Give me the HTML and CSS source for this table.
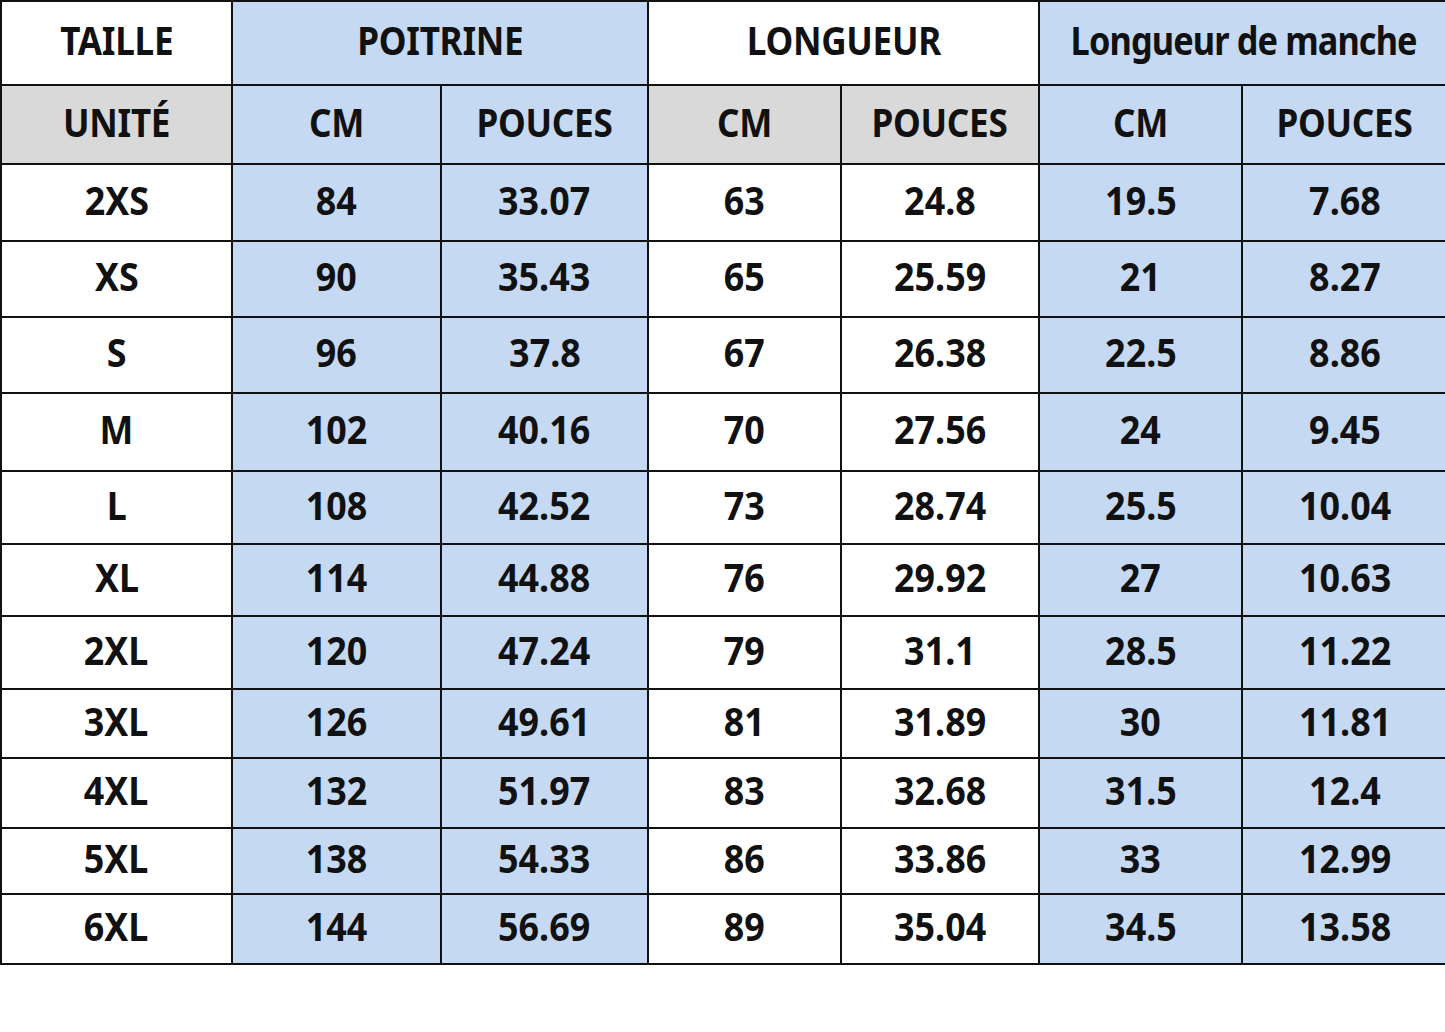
FILE: index.html
```html
<!DOCTYPE html>
<html lang="fr">
<head>
<meta charset="utf-8">
<title>Guide des tailles</title>
<link rel="stylesheet" href="styles.css">
</head>
<body>
<div class="chart">
  <div class="c w"><span class="t h">TAILLE</span></div>
  <div class="c b span2"><span class="t h">POITRINE</span></div>
  <div class="c w span2"><span class="t h">LONGUEUR</span></div>
  <div class="c b span2 last"><span class="t lc">Longueur de manche</span></div>

  <div class="c g"><span class="t h">UNITÉ</span></div>
  <div class="c b"><span class="t h">CM</span></div>
  <div class="c b"><span class="t h">POUCES</span></div>
  <div class="c g"><span class="t h">CM</span></div>
  <div class="c g"><span class="t h">POUCES</span></div>
  <div class="c b"><span class="t h">CM</span></div>
  <div class="c b last"><span class="t h">POUCES</span></div>

  <div class="c w"><span class="t">2XS</span></div><div class="c b"><span class="t">84</span></div><div class="c b"><span class="t">33.07</span></div><div class="c w"><span class="t">63</span></div><div class="c w"><span class="t">24.8</span></div><div class="c b"><span class="t">19.5</span></div><div class="c b last"><span class="t">7.68</span></div>
  <div class="c w"><span class="t">XS</span></div><div class="c b"><span class="t">90</span></div><div class="c b"><span class="t">35.43</span></div><div class="c w"><span class="t">65</span></div><div class="c w"><span class="t">25.59</span></div><div class="c b"><span class="t">21</span></div><div class="c b last"><span class="t">8.27</span></div>
  <div class="c w"><span class="t">S</span></div><div class="c b"><span class="t">96</span></div><div class="c b"><span class="t">37.8</span></div><div class="c w"><span class="t">67</span></div><div class="c w"><span class="t">26.38</span></div><div class="c b"><span class="t">22.5</span></div><div class="c b last"><span class="t">8.86</span></div>
  <div class="c w"><span class="t">M</span></div><div class="c b"><span class="t">102</span></div><div class="c b"><span class="t">40.16</span></div><div class="c w"><span class="t">70</span></div><div class="c w"><span class="t">27.56</span></div><div class="c b"><span class="t">24</span></div><div class="c b last"><span class="t">9.45</span></div>
  <div class="c w"><span class="t">L</span></div><div class="c b"><span class="t">108</span></div><div class="c b"><span class="t">42.52</span></div><div class="c w"><span class="t">73</span></div><div class="c w"><span class="t">28.74</span></div><div class="c b"><span class="t">25.5</span></div><div class="c b last"><span class="t">10.04</span></div>
  <div class="c w"><span class="t">XL</span></div><div class="c b"><span class="t">114</span></div><div class="c b"><span class="t">44.88</span></div><div class="c w"><span class="t">76</span></div><div class="c w"><span class="t">29.92</span></div><div class="c b"><span class="t">27</span></div><div class="c b last"><span class="t">10.63</span></div>
  <div class="c w"><span class="t">2XL</span></div><div class="c b"><span class="t">120</span></div><div class="c b"><span class="t">47.24</span></div><div class="c w"><span class="t">79</span></div><div class="c w"><span class="t">31.1</span></div><div class="c b"><span class="t">28.5</span></div><div class="c b last"><span class="t">11.22</span></div>
  <div class="c w"><span class="t">3XL</span></div><div class="c b"><span class="t">126</span></div><div class="c b"><span class="t">49.61</span></div><div class="c w"><span class="t">81</span></div><div class="c w"><span class="t">31.89</span></div><div class="c b"><span class="t">30</span></div><div class="c b last"><span class="t">11.81</span></div>
  <div class="c w"><span class="t">4XL</span></div><div class="c b"><span class="t">132</span></div><div class="c b"><span class="t">51.97</span></div><div class="c w"><span class="t">83</span></div><div class="c w"><span class="t">32.68</span></div><div class="c b"><span class="t">31.5</span></div><div class="c b last"><span class="t">12.4</span></div>
  <div class="c w"><span class="t">5XL</span></div><div class="c b"><span class="t">138</span></div><div class="c b"><span class="t">54.33</span></div><div class="c w"><span class="t">86</span></div><div class="c w"><span class="t">33.86</span></div><div class="c b"><span class="t">33</span></div><div class="c b last"><span class="t">12.99</span></div>
  <div class="c w"><span class="t">6XL</span></div><div class="c b"><span class="t">144</span></div><div class="c b"><span class="t">56.69</span></div><div class="c w"><span class="t">89</span></div><div class="c w"><span class="t">35.04</span></div><div class="c b"><span class="t">34.5</span></div><div class="c b last"><span class="t">13.58</span></div>
</div>
</body>
</html>
```

FILE: styles.css
```css
html, body {
  margin: 0;
  padding: 0;
  background: #ffffff;
}

.chart {
  display: grid;
  grid-template-columns: 231px 209px 207px 193px 198px 203px 204px;
  grid-template-rows: 84px 79px 77px 76px 76px 78px 73px 72px 73px 69px 70px 66px 70px;
  width: 1445px;
  box-sizing: border-box;
  border-top: 2px solid #111;
  border-left: 2px solid #111;
  font-family: "Noto Sans", "Open Sans", sans-serif;
  font-weight: 700;
  font-size: 39px;
  color: #111;
}

.c {
  display: flex;
  align-items: center;
  justify-content: center;
  box-sizing: border-box;
  padding-bottom: 7px;
  border-right: 2px solid #111;
  border-bottom: 2px solid #111;
  line-height: 1;
}

.t {
  display: inline-block;
  white-space: nowrap;
  transform: scaleX(0.92);
}

.t.h {
  letter-spacing: -0.3px;
  transform: scaleX(0.9);
}

.t.lc {
  letter-spacing: -1px;
  transform: scaleX(0.88);
}

.c.last {
  border-right: none;
}

.span2 {
  grid-column: span 2;
}

.w { background: #ffffff; }
.b { background: #c5d9f2; }
.g { background: #d9d9d9; }
```
